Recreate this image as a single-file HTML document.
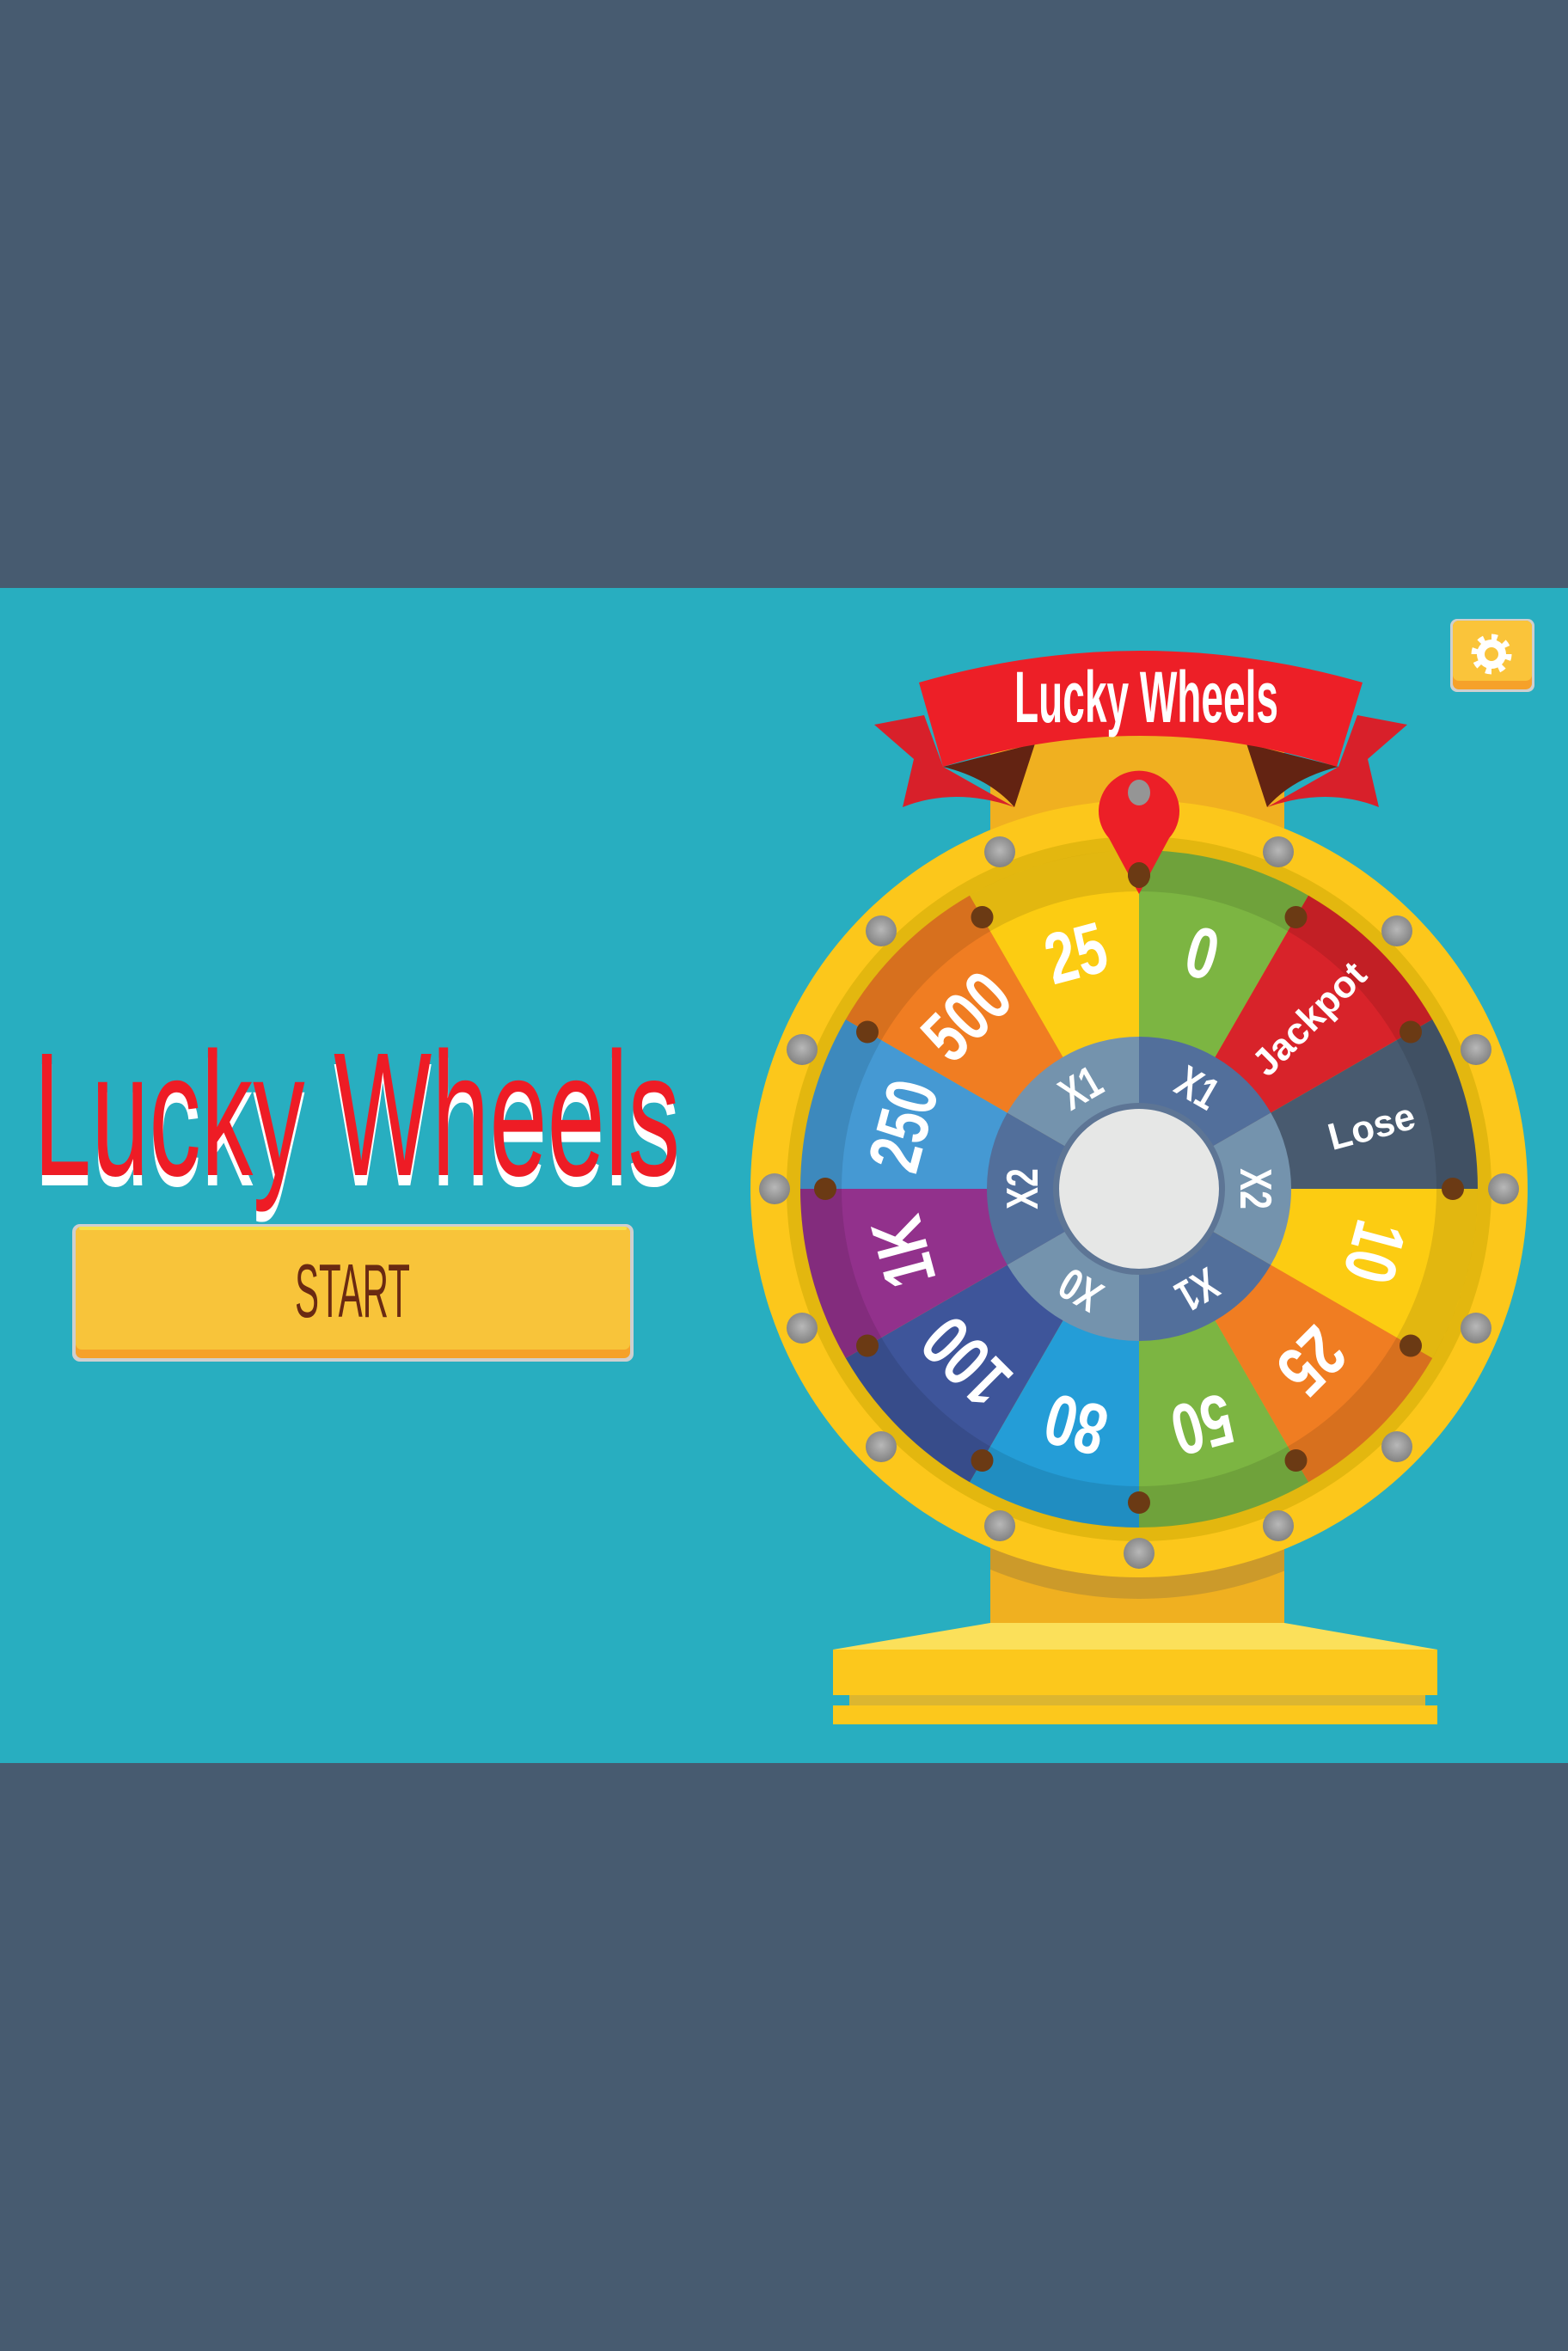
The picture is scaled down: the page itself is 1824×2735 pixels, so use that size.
<!DOCTYPE html>
<html><head><meta charset="utf-8"><style>html,body{margin:0;padding:0;background:#475b70}svg{display:block}</style></head><body>
<svg width="1824" height="2735" viewBox="0 0 1824 2735" xmlns="http://www.w3.org/2000/svg" font-family="Liberation Sans, sans-serif">
<defs>
<clipPath id="stand"><rect x="1152" y="850" width="342" height="1040"/></clipPath>
<radialGradient id="stud" cx="0.5" cy="0.45" r="0.6"><stop offset="0" stop-color="#b8b8b8"/><stop offset="1" stop-color="#7d7d7d"/></radialGradient>
</defs>
<rect width="1824" height="2735" fill="#475b70"/>
<rect y="684" width="1824" height="1367" fill="#28aec0"/>

<text x="39" y="1379" font-size="205" fill="#ffffff" textLength="752" lengthAdjust="spacingAndGlyphs">Lucky Wheels</text>
<text x="39" y="1367" font-size="205" fill="#ee1c25" textLength="752" lengthAdjust="spacingAndGlyphs">Lucky Wheels</text>

<rect x="84" y="1424" width="653" height="160" rx="9" fill="#cfcfcf"/>
<rect x="88" y="1427" width="645" height="153" rx="7" fill="#f6a12a"/>
<rect x="88" y="1427" width="645" height="143" rx="7" fill="#f8c43a"/>
<rect x="92" y="1427" width="637" height="4" rx="2" fill="#f5e24a"/>
<text x="343" y="1532" font-size="88" fill="#6a2a12" textLength="134" lengthAdjust="spacingAndGlyphs">START</text>

<rect x="1687" y="720" width="98" height="85" rx="8" fill="#cfcfcf"/>
<rect x="1690" y="722" width="92" height="80" rx="7" fill="#f6a12a"/>
<rect x="1690" y="722" width="92" height="70" rx="7" fill="#fac43a"/>
<circle cx="1735" cy="761" r="19" fill="none" stroke="#fff" stroke-width="9" stroke-dasharray="6.5 8.4"/>
<circle cx="1735" cy="761" r="17" fill="#fff"/>
<circle cx="1735" cy="761" r="8" fill="#fac43a"/>

<rect x="1152" y="850" width="342" height="1040" fill="#f0b020"/>
<circle cx="1325" cy="1405" r="455" fill="#cc9a2a" clip-path="url(#stand)"/>
<polygon points="1152,1888 1494,1888 1672,1919 969,1919" fill="#fbe05a"/>
<rect x="969" y="1919" width="703" height="53" fill="#fcc81c"/>
<rect x="988" y="1972" width="670" height="12" fill="#dcb630"/>
<rect x="969" y="1984" width="703" height="22" fill="#fcc81c"/>

<path d="M1017,843 L1075,832 L1097,892 L1180,939 Q1110,915 1050,939 L1063,883 Z" fill="#d8202a"/>
<path d="M1097,892 L1204,865 L1180,939 Q1150,905 1097,892 Z" fill="#632312"/>
<path d="M1637,843 L1579,832 L1557,892 L1474,939 Q1544,915 1604,939 L1591,883 Z" fill="#d8202a"/>
<path d="M1557,892 L1450,865 L1474,939 Q1504,905 1557,892 Z" fill="#632312"/>
<path d="M1069,794 Q1327,720 1585,794 L1555,892 Q1327,820 1097,892 Z" fill="#ed1f27"/>
<text x="1180" y="840" font-size="84" font-weight="bold" fill="#fff" textLength="307" lengthAdjust="spacingAndGlyphs">Lucky Wheels</text>

<g transform="translate(1325,1383)">
<circle r="452" fill="#fcc71b"/>
<circle r="410" fill="#e3b70f"/>
<g>
<path d="M0,0 L0,-394 A394,394 0 0,1 197,-341.2 Z" fill="#7cb542" transform="rotate(0)"/>
<path d="M0,0 L0,-394 A394,394 0 0,1 197,-341.2 Z" fill="#d8232a" transform="rotate(30)"/>
<path d="M0,0 L0,-394 A394,394 0 0,1 197,-341.2 Z" fill="#485a6f" transform="rotate(60)"/>
<path d="M0,0 L0,-394 A394,394 0 0,1 197,-341.2 Z" fill="#fccc12" transform="rotate(90)"/>
<path d="M0,0 L0,-394 A394,394 0 0,1 197,-341.2 Z" fill="#f07d22" transform="rotate(120)"/>
<path d="M0,0 L0,-394 A394,394 0 0,1 197,-341.2 Z" fill="#7cb542" transform="rotate(150)"/>
<path d="M0,0 L0,-394 A394,394 0 0,1 197,-341.2 Z" fill="#249dd7" transform="rotate(180)"/>
<path d="M0,0 L0,-394 A394,394 0 0,1 197,-341.2 Z" fill="#3e559a" transform="rotate(210)"/>
<path d="M0,0 L0,-394 A394,394 0 0,1 197,-341.2 Z" fill="#92318c" transform="rotate(240)"/>
<path d="M0,0 L0,-394 A394,394 0 0,1 197,-341.2 Z" fill="#4599d3" transform="rotate(270)"/>
<path d="M0,0 L0,-394 A394,394 0 0,1 197,-341.2 Z" fill="#f07d22" transform="rotate(300)"/>
<path d="M0,0 L0,-394 A394,394 0 0,1 197,-341.2 Z" fill="#fccc12" transform="rotate(330)"/>
</g>
<circle r="370" fill="none" stroke="#000" stroke-opacity="0.1" stroke-width="48"/>
<g fill="#fff" font-size="84" font-weight="bold" text-anchor="middle">
<text transform="rotate(15) scale(0.75,1)" y="-255">0</text>
<text transform="rotate(105) scale(0.75,1)" y="-255">10</text>
<text transform="rotate(135) scale(0.75,1)" y="-255">25</text>
<text transform="rotate(165) scale(0.75,1)" y="-255">50</text>
<text transform="rotate(195) scale(0.75,1)" y="-255">80</text>
<text transform="rotate(225) scale(0.75,1)" y="-255">100</text>
<text transform="rotate(255) scale(0.75,1)" y="-255">1K</text>
<text transform="rotate(285) scale(0.75,1)" y="-255">250</text>
<text transform="rotate(315) scale(0.75,1)" y="-255">500</text>
<text transform="rotate(345) scale(0.75,1)" y="-255">25</text>
</g>
<g fill="#fff" font-size="44" font-weight="600" text-anchor="middle">
<text transform="rotate(45) translate(0,-280) rotate(-90)" y="15">Jackpot</text>
<text transform="rotate(75) translate(0,-280) rotate(-90)" y="15">Lose</text>
</g>
<path d="M0,0 L0,-177 A177,177 0 0,1 153.3,-88.5 Z" fill="#526f9b" transform="rotate(0)"/>
<path d="M0,0 L0,-177 A177,177 0 0,1 153.3,-88.5 Z" fill="#7493ad" transform="rotate(60)"/>
<path d="M0,0 L0,-177 A177,177 0 0,1 153.3,-88.5 Z" fill="#526f9b" transform="rotate(120)"/>
<path d="M0,0 L0,-177 A177,177 0 0,1 153.3,-88.5 Z" fill="#7493ad" transform="rotate(180)"/>
<path d="M0,0 L0,-177 A177,177 0 0,1 153.3,-88.5 Z" fill="#526f9b" transform="rotate(240)"/>
<path d="M0,0 L0,-177 A177,177 0 0,1 153.3,-88.5 Z" fill="#7493ad" transform="rotate(300)"/>
<circle r="100" fill="#5d7595"/>
<g fill="#fff" font-size="52" font-weight="bold" text-anchor="middle">
<text transform="rotate(-30) scale(0.75,1)" y="-118">X1</text>
<text transform="rotate(30) scale(0.75,1)" y="-118">X1</text>
<text transform="rotate(90) scale(0.75,1)" y="-118">X2</text>
<text transform="rotate(150) scale(0.75,1)" y="-118">X1</text>
<text transform="rotate(210) scale(0.75,1)" y="-118">X0</text>
<text transform="rotate(270) scale(0.75,1)" y="-118">X2</text>
</g>
<circle r="93" fill="#e6e7e6"/>
<g fill="#6b3a14">
<circle cx="0" cy="-365" r="13"/><circle cx="182.5" cy="-316" r="13"/><circle cx="316" cy="-182.5" r="13"/>
<circle cx="365" cy="0" r="13"/><circle cx="316" cy="182.5" r="13"/><circle cx="182.5" cy="316" r="13"/>
<circle cx="0" cy="365" r="13"/><circle cx="-182.5" cy="316" r="13"/><circle cx="-316" cy="182.5" r="13"/>
<circle cx="-365" cy="0" r="13"/><circle cx="-316" cy="-182.5" r="13"/><circle cx="-182.5" cy="-316" r="13"/>
</g>
<g fill="url(#stud)">
<circle cx="162" cy="-392" r="18"/><circle cx="300" cy="-300" r="18"/><circle cx="392" cy="-162" r="18"/>
<circle cx="424" cy="0" r="18"/><circle cx="392" cy="162" r="18"/><circle cx="300" cy="300" r="18"/>
<circle cx="162" cy="392" r="18"/><circle cx="0" cy="424" r="18"/><circle cx="-162" cy="392" r="18"/>
<circle cx="-300" cy="300" r="18"/><circle cx="-392" cy="162" r="18"/><circle cx="-424" cy="0" r="18"/>
<circle cx="-392" cy="-162" r="18"/><circle cx="-300" cy="-300" r="18"/><circle cx="-162" cy="-392" r="18"/>
</g>
</g>

<path d="M1325,1040 L1290,975 A47,47 0 1,1 1360,975 Z" fill="#ec1f27"/>
<ellipse cx="1325" cy="922" rx="13" ry="15" fill="#959595"/>
<ellipse cx="1325" cy="1018" rx="13" ry="15" fill="#6b3a14"/>
</svg>
</body></html>
